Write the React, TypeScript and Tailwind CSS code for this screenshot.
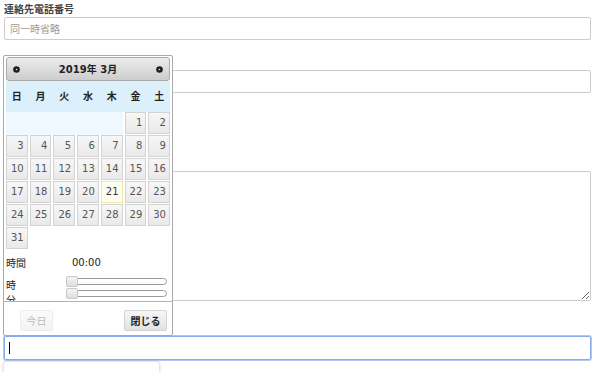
import React from "react";

const jp = "font-['Noto_Sans_CJK_JP',sans-serif]";
const ui = "font-['DejaVu_Sans','Noto_Sans_CJK_JP',sans-serif]";

const weekdays = ["日", "月", "火", "水", "木", "金", "土"];
const dates = Array.from({ length: 29 }, (_, i) => i + 3);

const Arrow = ({ dir }: { dir: "w" | "e" }) => (
  <svg width="7" height="7" viewBox="0 0 7 7">
    <circle cx="3.5" cy="3.5" r="3.3" fill="#1e1e1e" />
    {dir === "w" ? (
      <path d="M2.6 3.5 L4.2 2.5 L4.2 4.5 Z" fill="#fff" />
    ) : (
      <path d="M4.4 3.5 L2.8 2.5 L2.8 4.5 Z" fill="#fff" />
    )}
  </svg>
);

const Slider = () => (
  <div className="relative h-[11px] w-[101px]">
    <div className="absolute left-[1px] right-0 top-[2px] h-[7px] rounded-[4px] border border-[#9a9a9a] bg-white" />
    <div className="absolute left-0 top-0 h-[11px] w-[12px] rounded-[2px] border border-[#c8c8c8] bg-linear-to-b from-[#f4f4f4] to-[#dedede]" />
  </div>
);

const DatePicker = () => (
  <div className={`absolute left-[3px] top-[55px] w-[170px] rounded-[2px] border border-[#a9a9a9] bg-white px-[2px] pt-[1px] ${ui}`}>
    {/* header */}
    <div className="flex h-[24px] items-center justify-between rounded-[3px] border border-[#aaaaaa] bg-linear-to-b from-[#ececec] to-[#cdcdcd] px-[6px]">
      <Arrow dir="w" />
      <span className="text-[10px] font-bold text-[#222]">2019年 3月</span>
      <Arrow dir="e" />
    </div>

    {/* weekdays */}
    <div className="grid h-[31px] grid-cols-7 items-center gap-x-[2px] bg-[#dcf0fc]">
      {weekdays.map((d) => (
        <span key={d} className="text-center text-[10px] font-bold text-[#222]">
          {d}
        </span>
      ))}
    </div>

    {/* days */}
    <div className="grid grid-cols-7 gap-x-[2px] gap-y-[1px]">
      <div className="col-span-5 -mb-[1px] bg-[#eef8fe]" />
      {[1, 2, ...dates].map((n) => (
        <div
          key={n}
          className={
            n === 21
              ? "h-[22px] border border-[#f3e7a8] bg-[#fdfcf2] pr-[3px] text-right text-[10px] leading-[20px] text-[#363636]"
              : "h-[22px] border border-[#d3d3d3] bg-linear-to-b from-[#f7f7f7] to-[#e9e9e9] pr-[3px] text-right text-[10px] leading-[20px] text-[#555]"
          }
        >
          {n}
        </div>
      ))}
    </div>

    {/* time */}
    <div className="flex h-[52px] overflow-hidden text-[10px] leading-[12px] text-[#222]">
      <div className={`flex w-[60px] flex-col ${jp}`}>
        <span className="mt-[8px]">時間</span>
        <span className="mt-[10px]">時</span>
        <span className="mt-[3px]">分</span>
      </div>
      <div className="flex flex-col">
        <span className="ml-[6px] mt-[8px]">00:00</span>
        <div className="mt-[7px]">
          <Slider />
        </div>
        <div className="mt-[1px]">
          <Slider />
        </div>
      </div>
    </div>

    {/* buttons */}
    <div className={`-mx-[2px] flex justify-between border-t border-[#b0b0b0] pb-[4px] pt-[8px] ${jp}`}>
      <button className="ml-[16px] h-[21px] w-[33px] rounded-[2px] border border-[#d3d3d3] bg-linear-to-b from-[#f6f6f6] to-[#e2e2e2] text-[10px] text-[#555] opacity-40">
        今日
      </button>
      <button className="mr-[5px] h-[21px] w-[43px] rounded-[2px] border border-[#d3d3d3] bg-linear-to-b from-[#f6f6f6] to-[#e2e2e2] text-[10px] font-bold text-[#222]">
        閉じる
      </button>
    </div>
  </div>
);

const Label = ({ children }: { children?: React.ReactNode }) => (
  <label className={`block h-[17px] text-[10px] font-bold leading-[17px] text-[#444] ${jp}`}>
    {children}
  </label>
);

export default function App() {
  return (
    <div className="relative h-[372px] w-[594px] overflow-hidden bg-white px-[4px]">
      <div className="flex flex-col">
        <div>
          <Label>連絡先電話番号</Label>
          <input
            className={`block h-[23px] w-[587px] rounded-[2px] border border-[#cccccc] px-[5px] text-[10px] text-[#333] placeholder:text-[#9a9a9a] ${jp}`}
            placeholder="同一時省略"
          />
        </div>
        <div className="mt-[13px]">
          <Label />
          <input className="block h-[23px] w-[587px] rounded-[2px] border border-[#cccccc]" />
        </div>
        <div className="mt-[13px]">
          <Label />
          <input className="block h-[23px] w-[150px] rounded-[2px] border border-[#cccccc]" />
        </div>
        <div className="mt-[8px]">
          <Label />
          <textarea className="block h-[130px] w-[587px] rounded-[2px] border border-[#cccccc]" />
        </div>
        <div className="relative mt-[18px]">
          <Label />
          <div className="flex h-[24px] w-[587px] items-center rounded-[2px] border border-[#86acef] pl-[4px] shadow-[0_0_0_1px_#aec8f5]">
            <span className="h-[12px] w-[1px] bg-black" />
          </div>
          <div className="absolute left-[-1px] top-[42px] h-[24px] w-[157px] rounded-[3px] border border-[#e4e4e4] bg-white shadow-[0_1px_3px_rgba(0,0,0,0.15)]" />
        </div>
      </div>
      <DatePicker />
    </div>
  );
}
